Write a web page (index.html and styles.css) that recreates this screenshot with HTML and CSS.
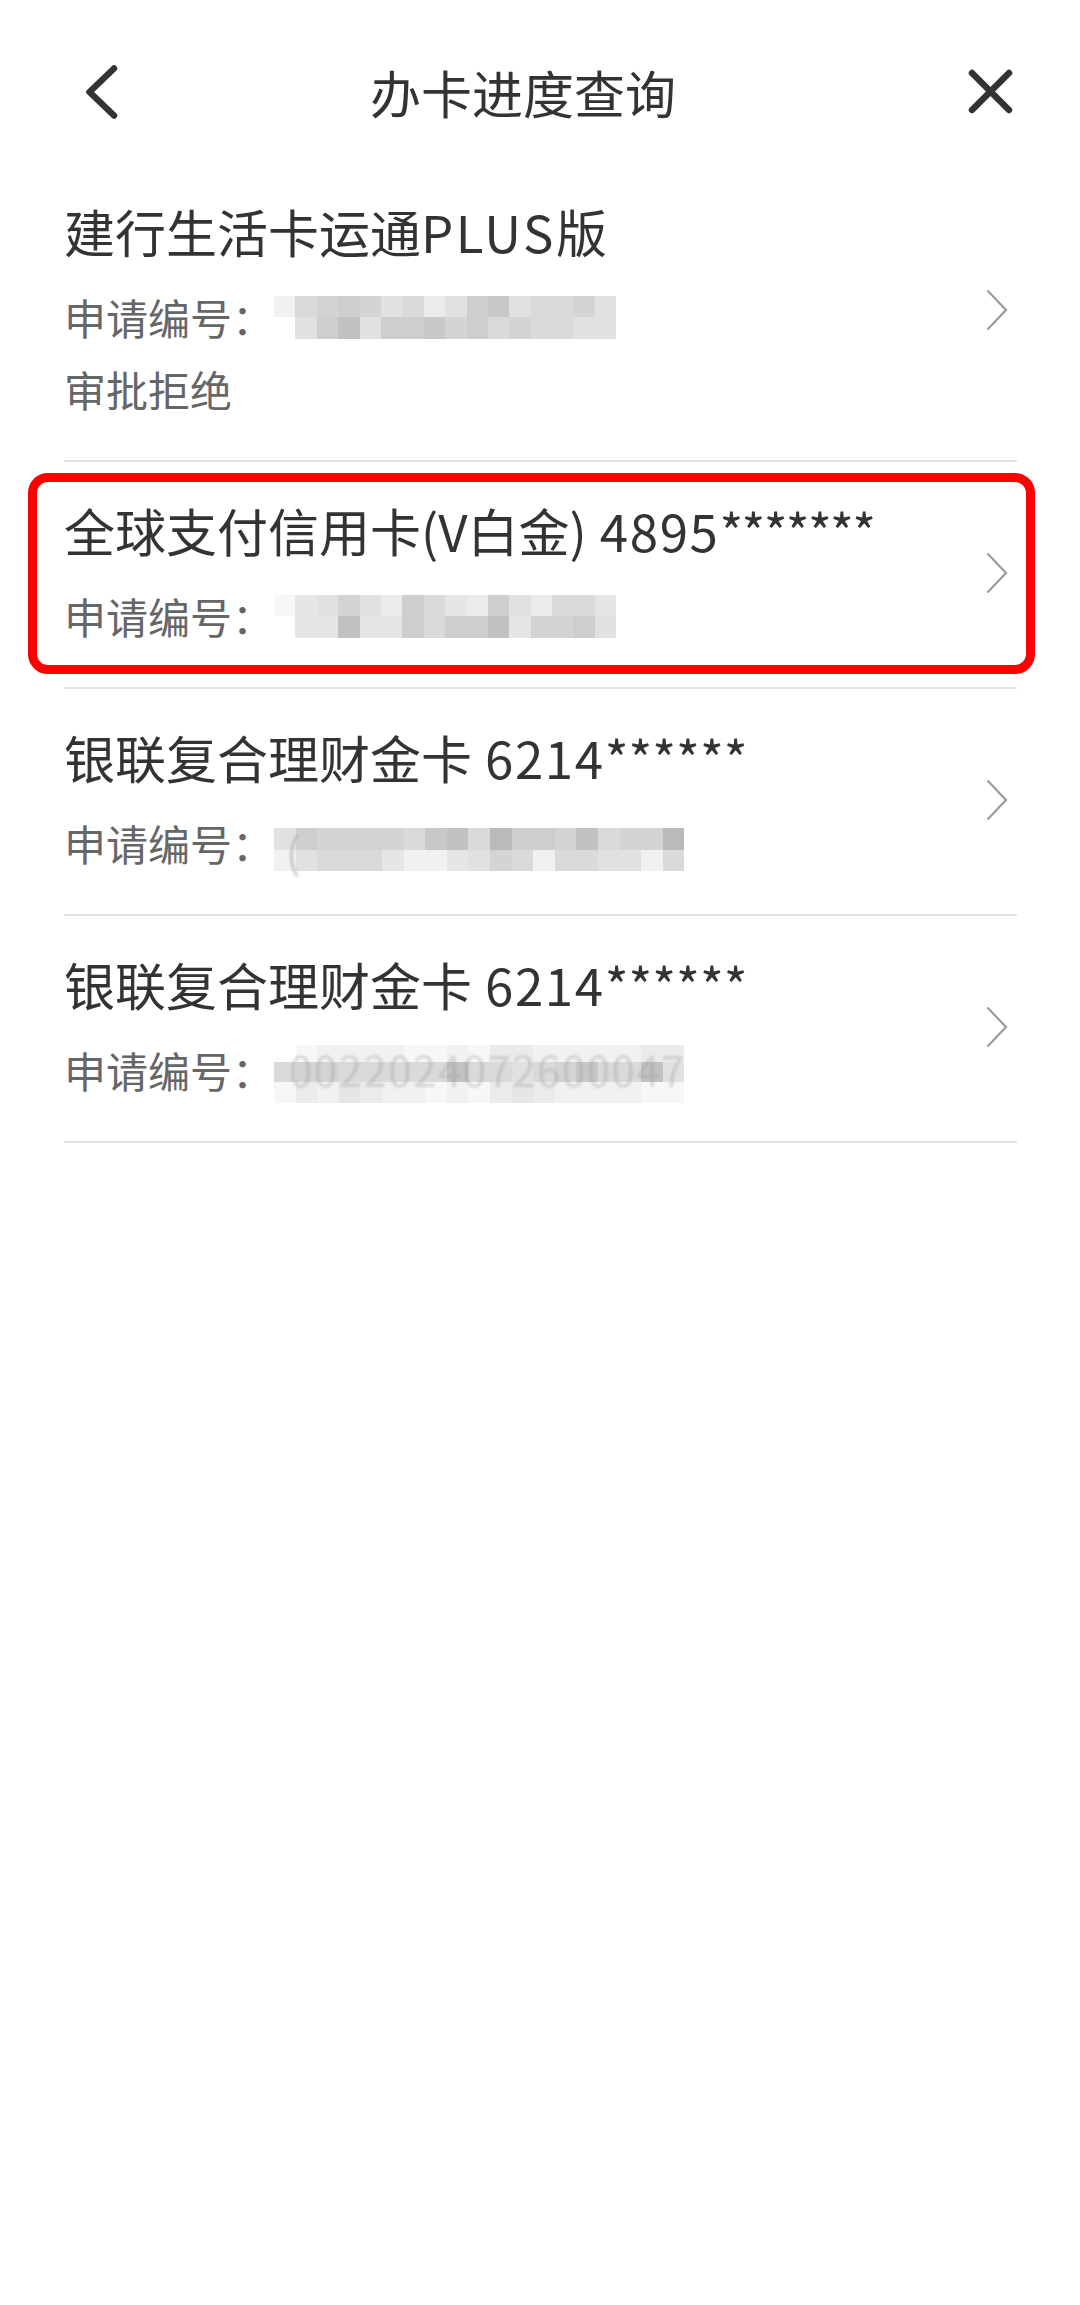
FILE: index.html
```html
<!DOCTYPE html>
<html lang="zh-CN">
<head>
<meta charset="utf-8">
<title>办卡进度查询</title>
<link rel="stylesheet" href="styles.css">
</head>
<body>
<div class="page">
  <header class="nav">
    <div class="nav-left">
      <svg class="icon-back" viewBox="0 0 34 56" aria-hidden="true"><path d="M30 4.5 L5.5 28 L30 51.5" fill="none" stroke="#333" stroke-width="6.5" stroke-linecap="round" stroke-linejoin="round"/></svg>
    </div>
    <h1 class="nav-title">办卡进度查询</h1>
    <div class="nav-right">
      <svg class="icon-close" viewBox="0 0 45 45" aria-hidden="true"><path d="M4 4 L41 41 M41 4 L4 41" fill="none" stroke="#333" stroke-width="6.5" stroke-linecap="round"/></svg>
    </div>
  </header>

  <ul class="list">
    <li class="item">
      <div class="item-body">
        <div class="item-title">建行生活卡运通<span class="latin">PLUS</span>版</div>
        <div class="item-line">
          <span class="label">申请编号：</span>
          <span class="mosaic cols16">
            <i class="k2"></i><i class="k6"></i><i class="k7"></i><i class="k8"></i><i class="k7"></i><i class="k5"></i><i class="k6"></i><i class="k3"></i><i class="k5"></i><i class="k8"></i><i class="k9"></i><i class="k5"></i><i class="k6"></i><i class="k6"></i><i class="k7"></i><i class="k5"></i>
            <i class="k0"></i><i class="k5"></i><i class="k8"></i><i class="ka"></i><i class="k5"></i><i class="k8"></i><i class="k8"></i><i class="k9"></i><i class="k7"></i><i class="k8"></i><i class="k6"></i><i class="k7"></i><i class="k6"></i><i class="k6"></i><i class="k5"></i><i class="k5"></i>
          </span>
        </div>
        <div class="item-status">审批拒绝</div>
      </div>
      <svg class="chev" viewBox="0 0 24 42" aria-hidden="true"><path d="M2.5 1.5 L21 21 L2.5 40.5" fill="none" stroke="#9b9b9b" stroke-width="2.2"/></svg>
    </li>

    <li class="item">
      <div class="item-body">
        <div class="item-title">全球支付信用卡(V白金)<span class="num">&nbsp;4895</span><span class="stars tight">*******</span></div>
        <div class="item-line">
          <span class="label">申请编号：</span>
          <span class="mosaic cols16">
            <i class="k1"></i><i class="k4"></i><i class="k5"></i><i class="k7"></i><i class="k5"></i><i class="k3"></i><i class="k8"></i><i class="k6"></i><i class="k4"></i><i class="k3"></i><i class="k8"></i><i class="k5"></i><i class="k3"></i><i class="k6"></i><i class="k6"></i><i class="k4"></i>
            <i class="k0"></i><i class="k4"></i><i class="k4"></i><i class="ka"></i><i class="k4"></i><i class="k4"></i><i class="k8"></i><i class="k6"></i><i class="k8"></i><i class="k8"></i><i class="ka"></i><i class="k4"></i><i class="k7"></i><i class="k7"></i><i class="k8"></i><i class="k5"></i>
          </span>
        </div>
      </div>
      <svg class="chev" viewBox="0 0 24 42" aria-hidden="true"><path d="M2.5 1.5 L21 21 L2.5 40.5" fill="none" stroke="#9b9b9b" stroke-width="2.2"/></svg>
      <div class="highlight"></div>
    </li>

    <li class="item">
      <div class="item-body">
        <div class="item-title">银联复合理财金卡<span class="num">&nbsp;6214</span><span class="stars">******</span></div>
        <div class="item-line">
          <span class="label">申请编号：</span>
          <span class="mosaic cols19 low">
            <i class="k5"></i><i class="k8"></i><i class="k7"></i><i class="k7"></i><i class="k7"></i><i class="k7"></i><i class="k6"></i><i class="k9"></i><i class="ka"></i><i class="k6"></i><i class="kb"></i><i class="k8"></i><i class="k8"></i><i class="k7"></i><i class="ka"></i><i class="k6"></i><i class="k7"></i><i class="k7"></i><i class="kb"></i>
            <i class="k2"></i><i class="k5"></i><i class="k6"></i><i class="k6"></i><i class="k6"></i><i class="k4"></i><i class="k2"></i><i class="k2"></i><i class="k4"></i><i class="k5"></i><i class="k7"></i><i class="k6"></i><i class="k2"></i><i class="k6"></i><i class="k6"></i><i class="k5"></i><i class="k5"></i><i class="k2"></i><i class="k6"></i>
            <span class="ghost paren">(</span>
          </span>
        </div>
      </div>
      <svg class="chev" viewBox="0 0 24 42" aria-hidden="true"><path d="M2.5 1.5 L21 21 L2.5 40.5" fill="none" stroke="#9b9b9b" stroke-width="2.2"/></svg>
    </li>

    <li class="item">
      <div class="item-body">
        <div class="item-title">银联复合理财金卡<span class="num">&nbsp;6214</span><span class="stars">******</span></div>
        <div class="item-line">
          <span class="label">申请编号：</span>
          <span class="mosaic cols19 rows3 lower">
            <i class="k0"></i><i class="k1"></i><i class="k2"></i><i class="k2"></i><i class="k2"></i><i class="k2"></i><i class="k1"></i><i class="k1"></i><i class="k2"></i><i class="k1"></i><i class="k3"></i><i class="k3"></i><i class="k2"></i><i class="k2"></i><i class="k2"></i><i class="k2"></i><i class="k2"></i><i class="k3"></i><i class="k3"></i>
            <i class="k6"></i><i class="k7"></i><i class="k7"></i><i class="k6"></i><i class="k6"></i><i class="k6"></i><i class="k6"></i><i class="k6"></i><i class="ka"></i><i class="k6"></i><i class="k6"></i><i class="k5"></i><i class="k6"></i><i class="k7"></i><i class="k9"></i><i class="k6"></i><i class="k6"></i><i class="ka"></i><i class="k5"></i>
            <i class="k1"></i><i class="k3"></i><i class="k2"></i><i class="k4"></i><i class="k3"></i><i class="k2"></i><i class="k2"></i><i class="k1"></i><i class="k2"></i><i class="k1"></i><i class="k3"></i><i class="k4"></i><i class="k3"></i><i class="k2"></i><i class="k2"></i><i class="k2"></i><i class="k2"></i><i class="k1"></i><i class="k1"></i>
            <span class="ghost digits">0022024072600047</span>
          </span>
        </div>
      </div>
      <svg class="chev" viewBox="0 0 24 42" aria-hidden="true"><path d="M2.5 1.5 L21 21 L2.5 40.5" fill="none" stroke="#9b9b9b" stroke-width="2.2"/></svg>
    </li>
  </ul>
</div>
</body>
</html>
```

FILE: styles.css
```css
html, body {
  margin: 0;
  padding: 0;
  background: #ffffff;
}

body {
  font-family: "Noto Sans CJK SC", "Noto Sans", sans-serif;
  color: #333333;
}

.page {
  width: 1080px;
  min-height: 2305px;
  background: #ffffff;
}

/* ---------- navigation bar ---------- */
.nav {
  display: flex;
  align-items: center;
  height: 143px;
  padding: 20px 67px 0 84px;
}

.nav-left {
  width: 60px;
  display: flex;
}

.nav-right {
  width: 111px;
  display: flex;
  justify-content: flex-end;
}

.nav-title {
  flex: 1;
  margin: 0;
  text-align: center;
  font-size: 51px;
  line-height: 62px;
  font-weight: 400;
  color: #333333;
}

.icon-back {
  display: block;
  width: 34px;
  height: 56px;
}

.icon-close {
  display: block;
  width: 45px;
  height: 45px;
}

/* ---------- list ---------- */
.list {
  list-style: none;
  margin: 0;
  padding: 0 63px 0 64px;
}

.item {
  position: relative;
  display: flex;
  align-items: center;
  padding: 37px 0 45px;
  border-bottom: 2px solid #e3e3e3;
}

.item-body {
  flex: 1;
  min-width: 0;
}

.item-title {
  font-size: 51px;
  line-height: 62px;
  color: #333333;
  white-space: nowrap;
}

.latin {
  letter-spacing: 2.5px;
}

.num {
  letter-spacing: 1.6px;
}

.stars {
  letter-spacing: 0;
}

.stars.tight {
  letter-spacing: -1.7px;
}

.item-line {
  display: flex;
  align-items: center;
  height: 52px;
  margin-top: 29px;
}

.label {
  font-size: 42px;
  line-height: 52px;
  color: #666666;
  white-space: nowrap;
}

.item-status {
  margin-top: 20px;
  font-size: 42px;
  line-height: 52px;
  color: #666666;
}

.chev {
  flex-shrink: 0;
  width: 24px;
  height: 42px;
  margin-top: 4px;
  margin-right: 8px;
}

/* annotation frame drawn over the second record */
.highlight {
  position: absolute;
  top: 11px;
  bottom: 13px;
  left: -36px;
  right: -18px;
  border: 9px solid #ff0000;
  border-radius: 20px;
  pointer-events: none;
}

/* ---------- pixelated (masked) application numbers ---------- */
.mosaic {
  position: relative;
  display: grid;
  grid-auto-rows: 21.5px;
  flex-shrink: 0;
}

.mosaic i {
  display: block;
}

.cols16 {
  grid-template-columns: repeat(16, 21.4px);
}

.cols19 {
  grid-template-columns: repeat(19, 21.6px);
}

.rows3 {
  grid-template-rows: 17px 20px 21px;
}

.low {
  margin-top: 13px;
}

.lower {
  margin-top: 8px;
}

.ghost {
  position: absolute;
  top: 0;
  font-size: 42px;
  line-height: 42px;
  white-space: nowrap;
  pointer-events: none;
  filter: blur(1px);
}

.paren {
  left: 12px;
  top: 2px;
  color: rgba(170, 170, 170, 0.55);
}

.digits {
  left: 15px;
  top: 3px;
  letter-spacing: 1.5px;
  color: rgba(150, 150, 150, 0.3);
}

.k0 { background: #ffffff; }
.k1 { background: #f7f7f7; }
.k2 { background: #f1f1f1; }
.k3 { background: #ebebeb; }
.k4 { background: #e6e6e6; }
.k5 { background: #e1e1e1; }
.k6 { background: #dadada; }
.k7 { background: #d4d4d4; }
.k8 { background: #cecece; }
.k9 { background: #c8c8c8; }
.ka { background: #c2c2c2; }
.kb { background: #bababa; }
```
